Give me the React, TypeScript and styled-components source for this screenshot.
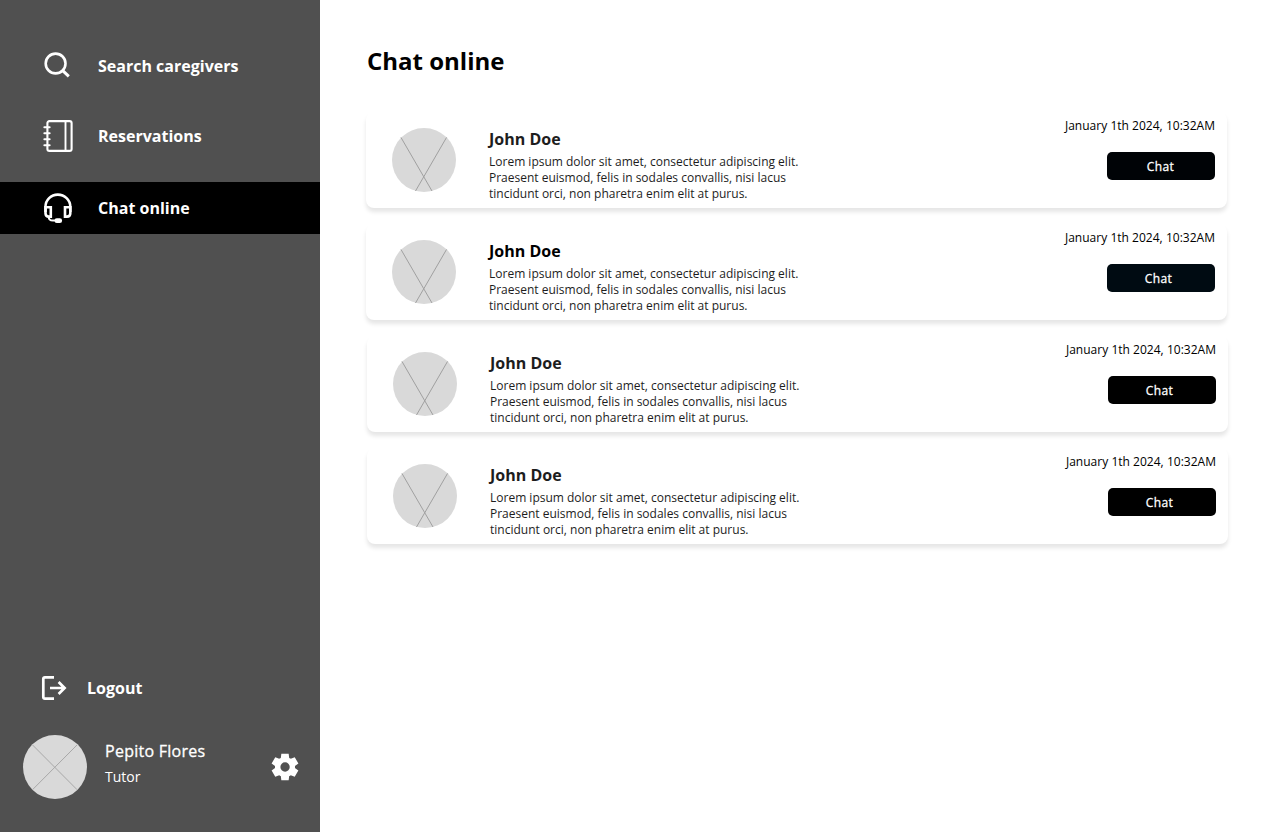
import React from "react";
import styled, { createGlobalStyle } from "styled-components";

const GlobalStyle = createGlobalStyle`
  *, *::before, *::after { box-sizing: border-box; }
  body { margin: 0; background: #fff; font-family: "Open Sans", "Noto Sans", sans-serif; }
  h1, h2, p { margin: 0; }
`;

const Page = styled.div`
  display: flex;
  height: 832px;
  overflow: hidden;
`;

const Sidebar = styled.aside`
  display: flex;
  flex-direction: column;
  width: 320px;
  flex: none;
  padding-top: 40px;
  background: #505050;
  color: #fff;
`;

const Nav = styled.nav`
  display: flex;
  flex-direction: column;
`;

const NavItem = styled.a<{ $active?: boolean; $gap: number }>`
  display: flex;
  align-items: center;
  height: 52px;
  margin-bottom: ${(p) => p.$gap}px;
  padding-left: 42px;
  background: ${(p) => (p.$active ? "#000" : "transparent")};
  font-size: 16px;
  font-weight: 700;
  line-height: 24px;
`;

const IconSlot = styled.span`
  display: flex;
  width: 32px;
  height: 32px;
  margin-right: 24px;
`;

const Logout = styled.a`
  display: flex;
  align-items: center;
  gap: 19px;
  height: 32px;
  margin-top: auto;
  padding-left: 40px;
  font-size: 16px;
  font-weight: 700;
  line-height: 24px;
`;

const Profile = styled.div`
  display: flex;
  align-items: center;
  height: 64px;
  margin: 31px 19px 33px 23px;
`;

const ProfileText = styled.div`
  flex: 1;
  align-self: flex-start;
  margin: 4px 0 0 18px;
`;

const ProfileName = styled.p`
  font-size: 16px;
  font-weight: 400;
  line-height: 24px;
  letter-spacing: 0.26px;
  -webkit-text-stroke: 0.3px currentColor;
`;

const ProfileRole = styled.p`
  margin-top: 4px;
  font-size: 14px;
  line-height: 20px;
`;

const Main = styled.main`
  flex: 1;
  padding: 43px 0 0 46px;
`;

const Title = styled.h1`
  margin-left: 1px;
  font-size: 24px;
  font-weight: 700;
  line-height: 36px;
  color: #000;
`;

const ChatList = styled.div`
  display: flex;
  flex-direction: column;
  gap: 16px;
  margin-top: 33px;
`;

const Card = styled.article<{ $shift: number }>`
  display: flex;
  width: 861px;
  height: 96px;
  margin-left: ${(p) => p.$shift}px;
  padding: 0 12px 0 26px;
  border-radius: 8px;
  background: #fff;
  box-shadow: 0 4px 4px rgba(0, 0, 0, 0.1);
`;

const CardAvatar = styled.div`
  width: 64px;
  height: 64px;
  margin-top: 16px;
`;

const Message = styled.div`
  width: 330px;
  margin: 15px 0 0 33px;
`;

const Name = styled.h2<{ $color: string }>`
  font-size: 16px;
  font-weight: 700;
  line-height: 24px;
  color: ${(p) => p.$color};
`;

const Preview = styled.p`
  margin-top: 3px;
  font-size: 12px;
  line-height: 16px;
  color: #1d1d1d;
  white-space: nowrap;
`;

const Side = styled.div`
  display: flex;
  flex-direction: column;
  align-items: flex-end;
  margin-left: auto;
  padding-top: 6px;
`;

const Time = styled.time`
  font-size: 12px;
  line-height: 16px;
  letter-spacing: 0.02px;
  color: #000;
`;

const ChatButton = styled.button<{ $bg: string; $inset: number }>`
  width: 108px;
  height: 28px;
  margin-top: 18px;
  padding: 2px ${(p) => p.$inset}px 0 0;
  border: 0;
  border-radius: 5px;
  background: ${(p) => p.$bg};
  color: #fff;
  font-family: inherit;
  font-size: 12px;
  font-weight: 400;
  line-height: 16px;
  letter-spacing: 0.4px;
  -webkit-text-stroke: 0.3px currentColor;
`;

const SearchIcon = () => (
  <svg width="32" height="32" viewBox="0 0 32 32" fill="none" stroke="#fff" strokeWidth="2.6">
    <circle cx="13.6" cy="13.5" r="9.9" />
    <path d="M20.2 20.2L26.8 26.4" strokeWidth="3" />
  </svg>
);

const NotebookIcon = () => (
  <svg width="32" height="32" viewBox="0 0 32 32" fill="none" stroke="#fff" strokeWidth="2.1" strokeLinecap="round">
    <rect x="5.4" y="1.1" width="24.2" height="29.8" rx="2" />
    <path d="M23.5 1V31" strokeWidth="1.9" />
    <path d="M2.4 7.2H7.6M2.4 13.2H7.6M2.4 19.2H7.6M2.4 25.2H7.6" />
  </svg>
);

const HeadsetIcon = () => (
  <svg width="32" height="32" viewBox="0 0 32 32" fill="none" stroke="#fff" strokeWidth="2.6">
    <path d="M3.5 20V14.8C3.5 7.8 9 2.6 15.8 2.6S28.3 7.8 28.3 14.8V20" />
    <path d="M3.5 15.2H8.8V24.6H6.8Q3.5 24.6 3.5 21.2Z" />
    <path d="M28.3 15.2H23V24.6H25Q28.3 24.6 28.3 21.2Z" />
    <path d="M6.6 24.8Q6.8 28.6 10.8 28.6H15" strokeWidth="2" />
    <rect x="13.8" y="27.6" width="5" height="2.2" rx="1" />
  </svg>
);

const LogoutIcon = () => (
  <svg width="28" height="32" viewBox="0 0 28 32" fill="none" stroke="#fff" strokeWidth="2.7">
    <path d="M14 5.3H5Q3.3 5.3 3.3 7V25Q3.3 26.7 5 26.7H14" />
    <path d="M10 16H25M18.6 10L24.6 16L18.6 22" />
  </svg>
);

const GearIcon = () => (
  <svg width="32" height="32" viewBox="0 0 24 24" fill="#fff">
    <path d="M9.25 22l-.4-3.2q-.325-.125-.612-.3-.288-.175-.563-.375L4.7 19.375l-2.75-4.75 2.575-1.95Q4.5 12.5 4.5 12.338v-.675q0-.163.025-.338L1.95 9.375l2.75-4.75 2.975 1.25q.275-.2.575-.375.3-.175.6-.3l.4-3.2h5.5l.4 3.2q.325.125.613.3.287.175.562.375l2.975-1.25 2.75 4.75-2.575 1.95q.025.175.025.338v.675q0 .162-.05.337l2.575 1.95-2.75 4.75-2.95-1.25q-.275.2-.575.375-.3.175-.6.3l-.4 3.2Zm2.8-6.5q1.45 0 2.475-1.025Q15.55 13.45 15.55 12q0-1.45-1.025-2.475Q13.5 8.5 12.05 8.5q-1.475 0-2.488 1.025Q8.55 10.55 8.55 12q0 1.45 1.012 2.475Q10.575 15.5 12.05 15.5Z" />
  </svg>
);

const ProfileAvatar = () => (
  <svg width="64" height="64" viewBox="0 0 64 64">
    <circle cx="32" cy="32" r="32" fill="#d9d9d9" />
    <path d="M9.4 9.8L54.2 54.8M54.2 9.8L9.4 54.8" stroke="#a8a8a8" strokeWidth="1" />
  </svg>
);

const PersonAvatar = () => (
  <svg width="64" height="64" viewBox="0 0 64 64">
    <circle cx="32" cy="32" r="32" fill="#d9d9d9" />
    <path d="M9 9.5L40 63M54.5 9.5L23.5 63" stroke="#a0a0a0" strokeWidth="1" />
  </svg>
);

const chats = [
  { shift: 0, name: "#1d1d1d", button: "#000306", inset: 1 },
  { shift: 0, name: "#000", button: "#000b12", inset: 5 },
  { shift: 1, name: "#1d1d1d", button: "#000", inset: 5 },
  { shift: 1, name: "#1d1d1d", button: "#000", inset: 5 },
];

export default function App() {
  return (
    <>
      <GlobalStyle />
      <Page>
        <Sidebar>
          <Nav>
            <NavItem $gap={18}>
              <IconSlot><SearchIcon /></IconSlot>
              Search caregivers
            </NavItem>
            <NavItem $gap={20}>
              <IconSlot><NotebookIcon /></IconSlot>
              Reservations
            </NavItem>
            <NavItem $active $gap={0}>
              <IconSlot><HeadsetIcon /></IconSlot>
              Chat online
            </NavItem>
          </Nav>
          <Logout>
            <LogoutIcon />
            Logout
          </Logout>
          <Profile>
            <ProfileAvatar />
            <ProfileText>
              <ProfileName>Pepito Flores</ProfileName>
              <ProfileRole>Tutor</ProfileRole>
            </ProfileText>
            <GearIcon />
          </Profile>
        </Sidebar>
        <Main>
          <Title>Chat online</Title>
          <ChatList>
            {chats.map((chat, i) => (
              <Card key={i} $shift={chat.shift}>
                <CardAvatar><PersonAvatar /></CardAvatar>
                <Message>
                  <Name $color={chat.name}>John Doe</Name>
                  <Preview>
                    Lorem ipsum dolor sit amet, consectetur adipiscing elit.<br />
                    Praesent euismod, felis in sodales convallis, nisi lacus<br />
                    tincidunt orci, non pharetra enim elit at purus.
                  </Preview>
                </Message>
                <Side>
                  <Time>January 1th 2024, 10:32AM</Time>
                  <ChatButton $bg={chat.button} $inset={chat.inset}>Chat</ChatButton>
                </Side>
              </Card>
            ))}
          </ChatList>
        </Main>
      </Page>
    </>
  );
}
